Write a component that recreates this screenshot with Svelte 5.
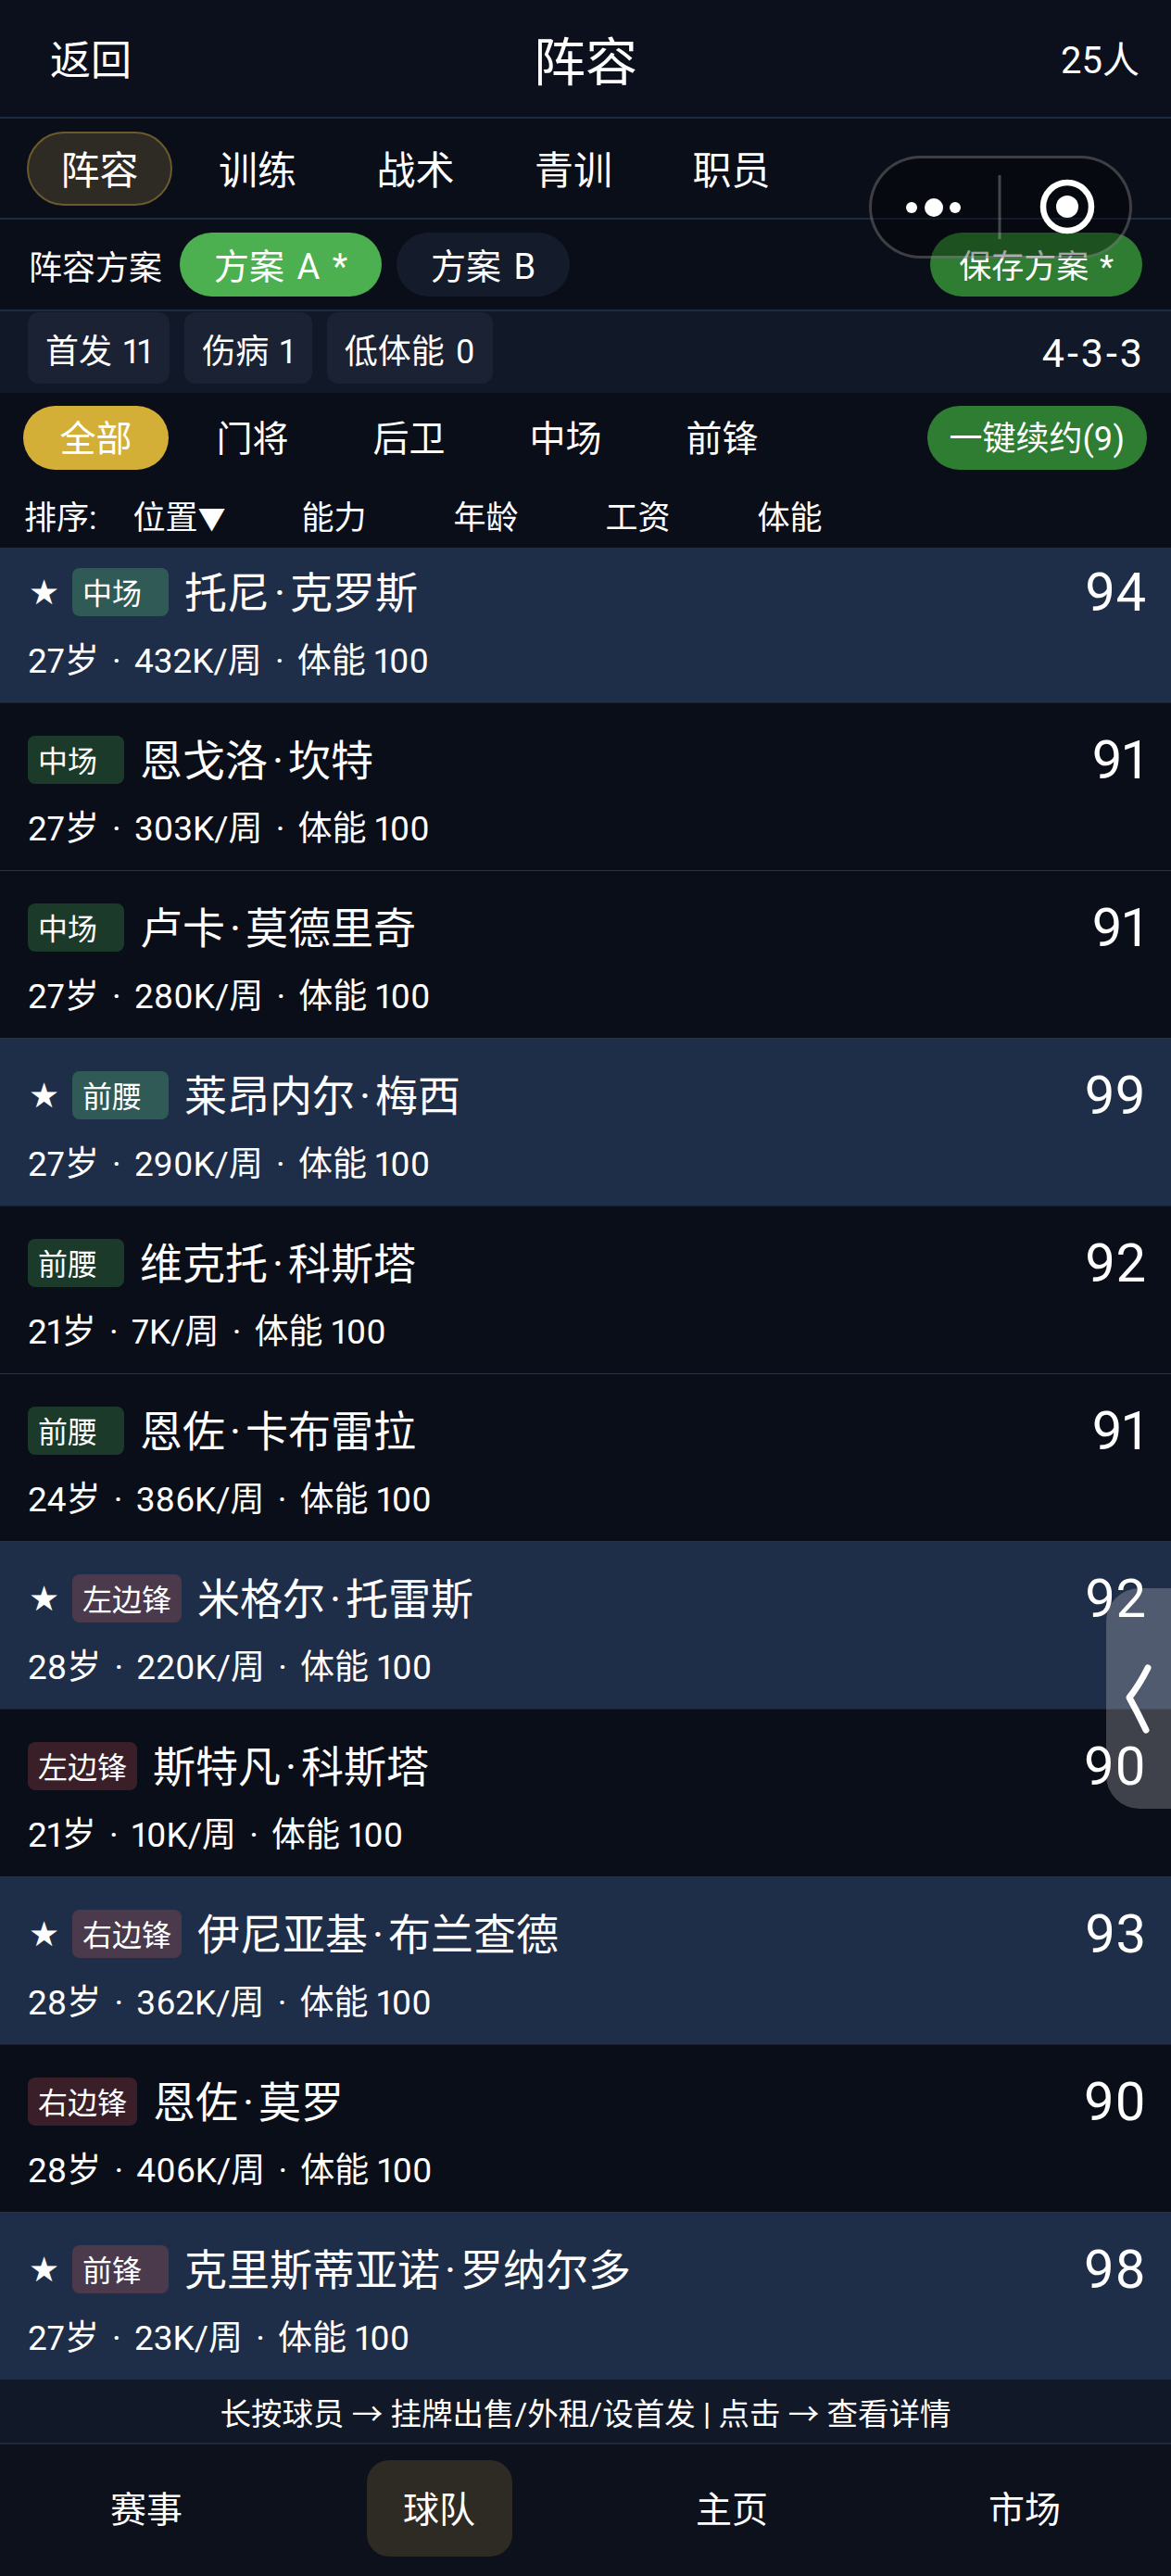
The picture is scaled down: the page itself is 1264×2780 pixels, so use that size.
<script lang="ts">
type Player = { name: string; pos: string; age: number; wage: string; score: number; starter: boolean; tone: 'mid' | 'att' };

const tabs = ['阵容', '训练', '战术', '青训', '职员'];
const filters = ['全部', '门将', '后卫', '中场', '前锋'];
const sorts = ['能力', '年龄', '工资', '体能'];
const stats = ['首发 11', '伤病 1', '低体能 0'];
const nav = ['赛事', '球队', '主页', '市场'];

const players: Player[] = [
	{ name: '托尼·克罗斯', pos: '中场', age: 27, wage: '432K', score: 94, starter: true, tone: 'mid' },
	{ name: '恩戈洛·坎特', pos: '中场', age: 27, wage: '303K', score: 91, starter: false, tone: 'mid' },
	{ name: '卢卡·莫德里奇', pos: '中场', age: 27, wage: '280K', score: 91, starter: false, tone: 'mid' },
	{ name: '莱昂内尔·梅西', pos: '前腰', age: 27, wage: '290K', score: 99, starter: true, tone: 'mid' },
	{ name: '维克托·科斯塔', pos: '前腰', age: 21, wage: '7K', score: 92, starter: false, tone: 'mid' },
	{ name: '恩佐·卡布雷拉', pos: '前腰', age: 24, wage: '386K', score: 91, starter: false, tone: 'mid' },
	{ name: '米格尔·托雷斯', pos: '左边锋', age: 28, wage: '220K', score: 92, starter: true, tone: 'att' },
	{ name: '斯特凡·科斯塔', pos: '左边锋', age: 21, wage: '10K', score: 90, starter: false, tone: 'att' },
	{ name: '伊尼亚基·布兰查德', pos: '右边锋', age: 28, wage: '362K', score: 93, starter: true, tone: 'att' },
	{ name: '恩佐·莫罗', pos: '右边锋', age: 28, wage: '406K', score: 90, starter: false, tone: 'att' },
	{ name: '克里斯蒂亚诺·罗纳尔多', pos: '前锋', age: 27, wage: '23K', score: 98, starter: true, tone: 'att' },
];
</script>

<div class="page">
	<header class="topbar">
		<span class="back">返回</span>
		<span class="title">阵容</span>
		<span class="count">25人</span>
	</header>

	<nav class="tabs">
		{#each tabs as tab, i}
			<span class="tab" class:active={i === 0}>{tab}</span>
		{/each}
	</nav>

	<section class="plans">
		<span class="plan-label">阵容方案</span>
		<span class="chip on">方案 A *</span>
		<span class="chip">方案 B</span>
		<span class="save">保存方案 *</span>
	</section>

	<section class="stats">
		{#each stats as stat}
			<span class="stat">{stat}</span>
		{/each}
		<span class="formation">4-3-3</span>
	</section>

	<section class="filters">
		{#each filters as filter, i}
			<span class="filter" class:active={i === 0}>{filter}</span>
		{/each}
		<span class="renew">一键续约(9)</span>
	</section>

	<section class="sorts">
		<span class="sort-label">排序:</span>
		<span class="sort first">位置<small>▼</small></span>
		{#each sorts as sort}
			<span class="sort">{sort}</span>
		{/each}
	</section>

	<div class="list">
		<ul>
			{#each players as p}
				{@const parts = p.name.split('·')}
				<li class:starter={p.starter}>
					<div class="line">
						{#if p.starter}<span class="star">★</span>{/if}
						<span class="tag {p.tone}">{p.pos}</span>
						<span class="name">{parts[0]}<i>·</i>{parts[1]}</span>
						<span class="score">{p.score}</span>
					</div>
					<p class="meta">{p.age}岁 <i>·</i> {p.wage}/周 <i>·</i> 体能 100</p>
				</li>
			{/each}
		</ul>
	</div>

	<p class="hint">长按球员 → 挂牌出售/外租/设首发 | 点击 → 查看详情</p>

	<footer class="bottom">
		{#each nav as item, i}
			<div class="nav-cell"><span class="nav-item" class:active={i === 1}>{item}</span></div>
		{/each}
	</footer>

	<div class="capsule">
		<svg width="284" height="111" viewBox="0 0 284 111" aria-hidden="true">
			<circle cx="46" cy="56" r="6" fill="#fff" />
			<circle cx="70" cy="56" r="10" fill="#fff" />
			<circle cx="93" cy="56" r="6" fill="#fff" />
			<line x1="141" y1="21" x2="141" y2="90" stroke="#fff" stroke-opacity="0.25" stroke-width="3" />
			<circle cx="214" cy="55" r="26" fill="none" stroke="#fff" stroke-width="6.5" />
			<circle cx="214" cy="55" r="12" fill="#fff" />
		</svg>
	</div>

	<div class="handle">
		<svg width="70" height="238" viewBox="0 0 70 238" aria-hidden="true">
			<path d="M45 86 Q36 104 25 118 Q34 134 43 153" fill="none" stroke="#fff" stroke-width="7" stroke-linecap="round" stroke-linejoin="round" />
		</svg>
	</div>
</div>

<style>
	:global(body) { margin: 0; background: #0a0e18; }
	.page { position: relative; width: 1264px; height: 2780px; overflow: hidden; display: flex; flex-direction: column; background: #0a0e18; color: #fff; font-family: Roboto, "Noto Sans CJK SC", sans-serif; font-weight: 400; font-variant-numeric: proportional-nums; }

	.topbar { flex: none; display: grid; grid-template-columns: 1fr auto 1fr; align-items: center; padding: 0 38px 2px 54px; box-sizing: content-box; height: 124px; border-bottom: 2px solid #1e2a3f; background: #0b101c; }
	.back { font-size: 44px; }
	.title { font-size: 56px; margin-left: -16px; }
	.count { font-size: 40px; justify-self: end; margin-right: -4px; }

	.tabs { height: 107px; flex: none; display: flex; align-items: center; gap: 13.5px; padding-left: 29px; border-bottom: 2px solid #1e2a3f; }
	.tab { box-sizing: border-box; width: 157px; height: 80px; padding-bottom: 3px; display: flex; align-items: center; justify-content: center; font-size: 42px; border: 2px solid transparent; border-radius: 40px; }
	.tab.active { background: #2e2b24; border-color: #6b5a2e; }

	.plans { height: 97px; flex: none; display: flex; align-items: center; padding: 0 31px 0 31px; border-bottom: 2px solid #1e2a3f; }
	.plan-label { font-size: 36px; width: 163px; }
	.chip { height: 69px; box-sizing: border-box; display: flex; align-items: center; padding: 0 37px 3px; margin-right: 16px; font-size: 38px; word-spacing: 4px; border-radius: 35px; background: #141b2a; }
	.chip.on { background: #4caf50; }
	.save { height: 69px; box-sizing: border-box; display: flex; align-items: center; margin-left: auto; padding: 0 31px 3px; font-size: 35px; word-spacing: 3px; border-radius: 35px; background: #2e7d32; }

	.stats { height: 88px; flex: none; box-sizing: border-box; display: flex; align-items: flex-start; gap: 16px; padding: 1px 28px 0 30px; background: #111827; }
	.stat { height: 77px; box-sizing: border-box; display: flex; align-items: center; padding: 0 19px; font-size: 36px; word-spacing: 3px; border-radius: 12px; background: #1a2233; }
	.formation { margin: 24px 0 0 auto; font-size: 43px; line-height: 40px; letter-spacing: 3px; }

	.filters { height: 96px; flex: none; display: flex; align-items: center; gap: 12px; padding: 0 26px 0 25px; box-sizing: border-box; }
	.filter { width: 157px; height: 69px; padding-bottom: 4px; box-sizing: border-box; display: flex; align-items: center; justify-content: center; font-size: 39px; border-radius: 35px; }
	.filter.active { background: #d4af37; }
	.renew { height: 69px; padding: 0 24px 4px; box-sizing: border-box; display: flex; align-items: center; margin-left: auto; font-size: 36px; border-radius: 35px; background: #2e7d32; }

	.sorts { height: 71px; flex: none; display: flex; align-items: center; gap: 94px; padding-left: 26px; font-size: 35px; }
	.sort-label { margin-right: -55px; }
	.sort.first { margin-right: -12px; }
	.sort small { font-size: 30px; }

	.list { height: 1977px; flex: none; overflow: hidden; }
	ul { list-style: none; margin: -13px 0 0; padding: 0; }
	li { height: 181px; box-sizing: border-box; padding: 35px 27px 0 30px; border-bottom: 1px solid #2a3345; background: #0a0e18; }
	li.starter { background: #1f2e48; border-bottom-color: #171f30; }
	.line { display: flex; align-items: center; height: 52px; }
	.star { width: 48px; margin-left: 1px; margin-right: -1px; font-size: 37px; font-family: "DejaVu Sans", sans-serif; }
	.tag { height: 52px; min-width: 104px; box-sizing: border-box; display: flex; align-items: center; padding: 0 11px 3px; margin-right: 17px; font-size: 32px; border-radius: 8px; }
	.tag.mid { background: #1b3a2a; }
	.tag.att { background: #3a1f28; }
	.starter .tag.mid { background: #2f5a55; }
	.starter .tag.att { background: #4a3a4c; }
	.name { font-size: 46px; padding-bottom: 7px; }
	.name i { font-style: normal; margin: 0 5px; }
	.score { margin-left: auto; font-size: 58px; }
	.meta { margin: 24px 0 0; font-size: 37px; line-height: 50px; }
	.meta i { font-style: normal; margin: 0 5px; }

	.hint { height: 68px; flex: none; margin: 0; display: flex; align-items: center; justify-content: center; font-size: 33.5px; background: #111827; border-bottom: 2px solid #1e2a3f; }

	.bottom { flex: 1; display: grid; grid-template-columns: repeat(4, 1fr); align-items: start; padding-top: 17px; background: #0c111c; }
	.nav-cell { display: flex; justify-content: center; }
	.nav-item { width: 157px; height: 104px; padding-bottom: 5px; box-sizing: border-box; display: flex; align-items: center; justify-content: center; font-size: 39px; border-radius: 24px; }
	.nav-item.active { background: #2e2b24; }

	.capsule { position: absolute; left: 938px; top: 168px; width: 284px; height: 111px; box-sizing: border-box; border: 3px solid rgba(255, 255, 255, 0.22); border-radius: 56px; background: rgba(0, 0, 0, 0.35); }
	.capsule svg { position: absolute; left: -3px; top: -3px; }
	.handle { position: absolute; left: 1194px; top: 1714px; width: 70px; height: 238px; border-radius: 36px 0 0 36px; background: rgba(255, 255, 255, 0.22); }
	.handle svg { display: block; }
</style>
